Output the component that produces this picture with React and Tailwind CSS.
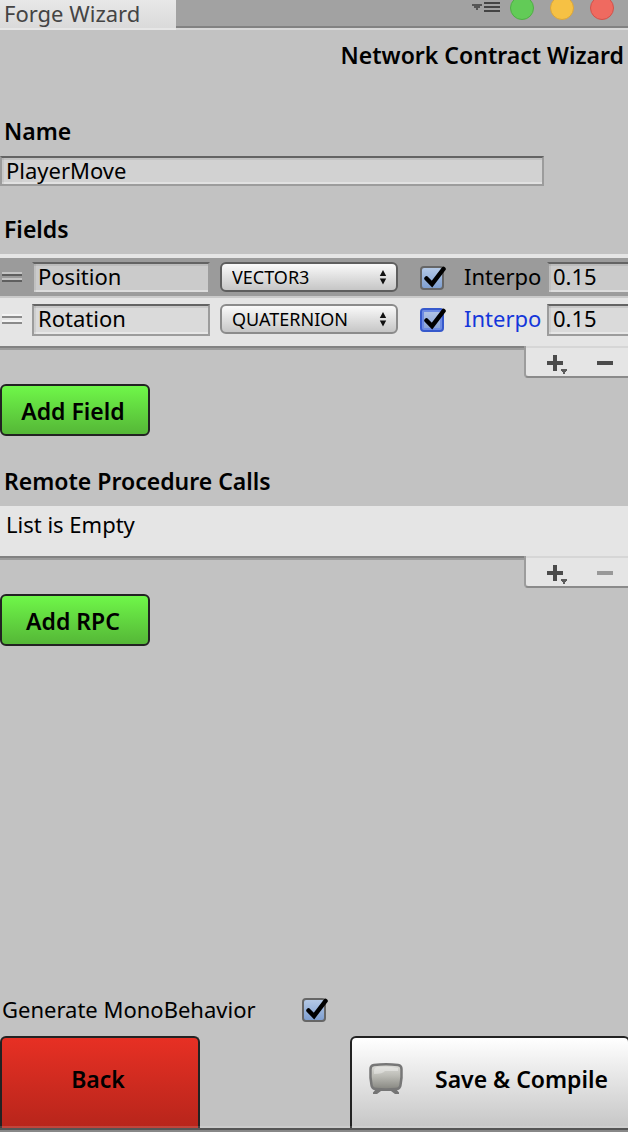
import { useState } from 'react';

const inset =
  'rounded-none border-2 border-t-[#636363] border-x-[#9c9c9c] border-b-[#9c9c9c] px-1 text-[22px] leading-6 text-black outline-none shadow-[inset_0_2px_0_rgba(0,0,0,0.08),inset_2px_0_0_rgba(0,0,0,0.05),inset_0_-2px_0_rgba(255,255,255,0.35)]';

function Check({ id, label, checked, onChange, focused }) {
  return (
    <span className="relative block size-6 shrink-0">
      <input
        id={id}
        type="checkbox"
        aria-label={label}
        checked={checked}
        onChange={(e) => onChange(e.target.checked)}
        className={
          focused
            ? 'block size-6 appearance-none rounded-[4px] border-2 border-[#3659cc] bg-linear-to-b from-[#b4c6e6] to-[#86a0d4] shadow-[inset_0_0_0_2px_#6d8be3]'
            : 'block size-6 appearance-none rounded-[4px] border-2 border-[#666] bg-linear-to-b from-[#b4c9e6] to-[#7f9fd0]'
        }
      />
      {checked && (
        <svg className="pointer-events-none absolute top-0 left-0 h-6 w-7" viewBox="0 0 28 24" fill="none">
          <path d="M6.500 12.500 L12 18 L23.500 3" stroke="#000" strokeWidth="4.500" strokeLinecap="round" />
        </svg>
      )}
    </span>
  );
}

function FieldRow({ id, field, onChange, selected, focused }) {
  return (
    <li
      className={
        selected
          ? 'flex h-10 items-start overflow-hidden border-b-2 border-[#cacaca] bg-[#9b9b9b] pt-1 pl-0.5'
          : 'flex h-12 items-start overflow-hidden bg-[#e5e5e5] pt-1.5 pl-0.5'
      }
    >
      <svg className="mt-2 mr-2.5 h-4 w-5 shrink-0" viewBox="0 0 20 16">
        <path d="M0 3h20M0 9h20" stroke={selected ? '#c4c4c4' : '#f3f3f3'} strokeWidth="2" />
        <path d="M0 5h20M0 11h20" stroke={selected ? '#5f5f5f' : '#8a8a8a'} strokeWidth="2" />
      </svg>
      <input
        aria-label="Field name"
        value={field.name}
        onChange={(e) => onChange({ ...field, name: e.target.value })}
        className={`${inset} h-8 w-[178px] shrink-0 pb-1 ${selected ? 'bg-[#cbcbcb]' : 'bg-[#dadada]'}`}
      />
      <span className="relative ml-2.5 block w-[178px] shrink-0">
        <select
          aria-label="Field type"
          value={field.type}
          onChange={(e) => onChange({ ...field, type: e.target.value })}
          className={`block h-[30px] w-full appearance-none rounded-md border-2 bg-linear-to-b from-[#fafafa] to-[#c6c6c6] pl-2.5 text-[18px] leading-6 text-black ${
            selected ? 'border-[#5e5e5e]' : 'border-[#8b8b8b]'
          }`}
        >
          <option>VECTOR3</option>
          <option>QUATERNION</option>
        </select>
        <svg className="pointer-events-none absolute top-2 right-[11px] h-4 w-2" viewBox="0 0 8 16">
          <path d="M4 0 L7.2 6 H0.8 Z M0.8 8.500 H7.2 L4 14.500 Z" fill="#111" />
        </svg>
      </span>
      <div className="mt-1 ml-[22px]">
        <Check
          id={id}
          label="Interpolate"
          focused={focused}
          checked={field.interpolate}
          onChange={(interpolate) => onChange({ ...field, interpolate })}
        />
      </div>
      <label
        htmlFor={id}
        className={`ml-5 w-[78px] shrink-0 overflow-hidden text-[22px] leading-7 ${focused ? 'text-[#1336da]' : 'text-black'}`}
      >
        Interpo
      </label>
      <input
        aria-label="Interpolation time"
        value={field.time}
        onChange={(e) => onChange({ ...field, time: e.target.value })}
        className={`${inset} ml-[5px] h-8 w-20 min-w-20 flex-1 border-r-0 pb-1 ${selected ? 'bg-[#cbcbcb]' : 'bg-[#dadada]'}`}
      />
    </li>
  );
}

function ListFooter({ disabled }) {
  return (
    <div className="flex items-start">
      <div className="h-1 flex-1 border-t-2 border-[#828282] bg-[#9c9c9c]" />
      <div className="flex h-8 w-[104px] rounded-bl-[4px] border-b-2 border-l-2 border-b-[#8a8a8a] border-l-[#9c9c9c] bg-[#e5e5e5] shadow-[inset_0_2px_0_#d6d6d6]">
        <button type="button" aria-label="Add item" className="flex w-[51px] items-start pt-[9px] pl-5">
          <svg className="h-5 w-6 shrink-0" viewBox="0 0 24 20">
            <path d="M1 8h16M9 0v16" stroke="#4b4b4b" strokeWidth="4" />
            <path d="M15 14h6v2h-1v1h-1v2h-2v-2h-1v-1h-1z" fill="#5c5c5c" />
          </svg>
        </button>
        <button type="button" aria-label="Remove item" disabled={disabled} className="flex flex-1 items-start pt-[15px] pl-5">
          <svg className="h-1 w-4 shrink-0" viewBox="0 0 16 4">
            <path d="M0 2h16" stroke={disabled ? '#999' : '#4b4b4b'} strokeWidth="4" />
          </svg>
        </button>
      </div>
    </div>
  );
}

const heading = 'px-1 text-[23px] leading-[30px] font-semibold';
const green =
  'mt-1.5 block h-[52px] w-[150px] rounded-md border-2 border-[#222] bg-linear-to-b from-[#6ff749] to-[#55b737] pt-0.5 pr-1 text-[23px] font-semibold';

export default function App() {
  const [name, setName] = useState('PlayerMove');
  const [mono, setMono] = useState(true);
  const [fields, setFields] = useState([
    { name: 'Position', type: 'VECTOR3', interpolate: true, time: '0.15' },
    { name: 'Rotation', type: 'QUATERNION', interpolate: true, time: '0.15' },
  ]);
  const update = (i, next) => setFields(fields.map((f, n) => (n === i ? next : f)));

  return (
    <div className="flex min-h-screen flex-col overflow-hidden bg-[#c2c2c2] font-['Lucida_Grande','Noto_Sans',sans-serif] text-black">
      <header className="flex h-[30px] items-start">
        <div className="h-[30px] w-44 border-b-2 border-[#e6e6e6] bg-linear-to-b from-[#e8e8e8] to-[#dadada] pl-1 text-[22px] leading-[26px] text-[#444]">
          Forge Wizard
        </div>
        <div className="flex h-[30px] flex-1 justify-end border-b-2 border-[#d8d8d8] bg-[#a2a2a2] shadow-[inset_0_-2px_0_#828282]">
          <svg className="h-[30px] w-40" viewBox="0 0 160 30" role="img" aria-label="Window controls">
            <path d="M4 4h10v2h-2v2h-2v2h-2v-2h-2v-2h-2z" fill="#555" />
            <path d="M16 3h16M16 7h16M16 11h16" stroke="#444" strokeWidth="2" />
            <circle cx="54" cy="8" r="11.5" fill="#62cb57" stroke="#4fae45" />
            <circle cx="94" cy="8" r="11.5" fill="#f6c144" stroke="#d9a43c" />
            <circle cx="134" cy="8" r="11.5" fill="#ef6a60" stroke="#d2524a" />
          </svg>
        </div>
      </header>

      <main className="flex flex-1 flex-col">
        <h1 className={`${heading} mt-2.5 text-right`}>Network Contract Wizard</h1>

        <label htmlFor="contract-name" className={`${heading} mt-[46px] block`}>
          Name
        </label>
        <div className="mt-2.5 flex pr-[84px]">
          <input
            id="contract-name"
            value={name}
            onChange={(e) => setName(e.target.value)}
            className={`${inset} h-[30px] min-w-0 flex-1 bg-[#d2d2d2] pb-0.5`}
          />
        </div>

        <h2 className={`${heading} mt-7`}>Fields</h2>
        <ul className="mt-2.5 border-t-4 border-[#e5e5e5]">
          {fields.map((f, i) => (
            <FieldRow key={i} id={`interpolate-${i}`} field={f} selected={i === 0} focused={i === 1} onChange={(next) => update(i, next)} />
          ))}
        </ul>
        <ListFooter />
        <button type="button" className={green}>
          Add Field
        </button>

        <h2 className={`${heading} mt-[30px]`}>Remote Procedure Calls</h2>
        <p className="mt-2.5 h-[50px] bg-[#e5e5e5] px-1.5 text-[22px] leading-9">List is Empty</p>
        <ListFooter disabled />
        <button type="button" className={green}>
          Add RPC
        </button>

        <div className="mt-auto flex items-center pt-10 pb-3.5">
          <label htmlFor="generate-mono" className="w-[302px] pb-0.5 pl-0.5 text-[22px] leading-[22px]">
            Generate MonoBehavior
          </label>
          <Check id="generate-mono" label="Generate MonoBehavior" checked={mono} onChange={setMono} />
        </div>
        <div className="relative flex h-[92px] justify-between">
          <button
            type="button"
            className="w-[200px] rounded-t-md border-2 border-b-0 border-[#222] bg-linear-to-b from-[#e73024] to-[#b7251b] pr-1 pb-2 text-[23px] font-semibold"
          >
            Back
          </button>
          <button
            type="button"
            className="-mr-0.5 flex w-[280px] items-center rounded-t-md border-2 border-b-0 border-[#222] bg-linear-to-b from-white to-[#c6c6c6] pr-5 pb-2 pl-4 text-[23px] font-semibold"
          >
            <svg className="h-9 w-9 shrink-0" viewBox="0 0 36 36" fill="none">
              <defs>
                <linearGradient id="screen" x1="0" y1="0" x2="0" y2="1">
                  <stop offset="0" stopColor="#dededa" />
                  <stop offset="0.45" stopColor="#bcbcb6" />
                  <stop offset="1" stopColor="#85857f" />
                </linearGradient>
              </defs>
              <path d="M8 28 H28 L31 31.500 V33 H27 L23 30 H13 L9 33 H5 V31.500 Z" fill="#747474" />
              <path
                d="M6 4 Q18 2.500 30 4 Q33.500 4.500 33.500 8 Q34 17 32.500 24 Q32 28 28 28 Q18 29 8 28 Q4 28 3.500 24 Q2 17 2.500 8 Q2.500 4.500 6 4 Z"
                fill="url(#screen)"
                stroke="#777"
                strokeWidth="2.500"
              />
              <path d="M6 10 Q6 6 10 6 Q20 5 30 7 V10 H17 Q15 13 6 13 Z" fill="#fff" opacity="0.35" />
            </svg>
            <span className="flex-1 text-right">Save &amp; Compile</span>
          </button>
          <div className="pointer-events-none absolute inset-x-0 bottom-0 h-0.5 bg-white/15" />
        </div>
      </main>
      <div className="h-1 border-t-2 border-[#555] bg-[#888]" />
    </div>
  );
}
